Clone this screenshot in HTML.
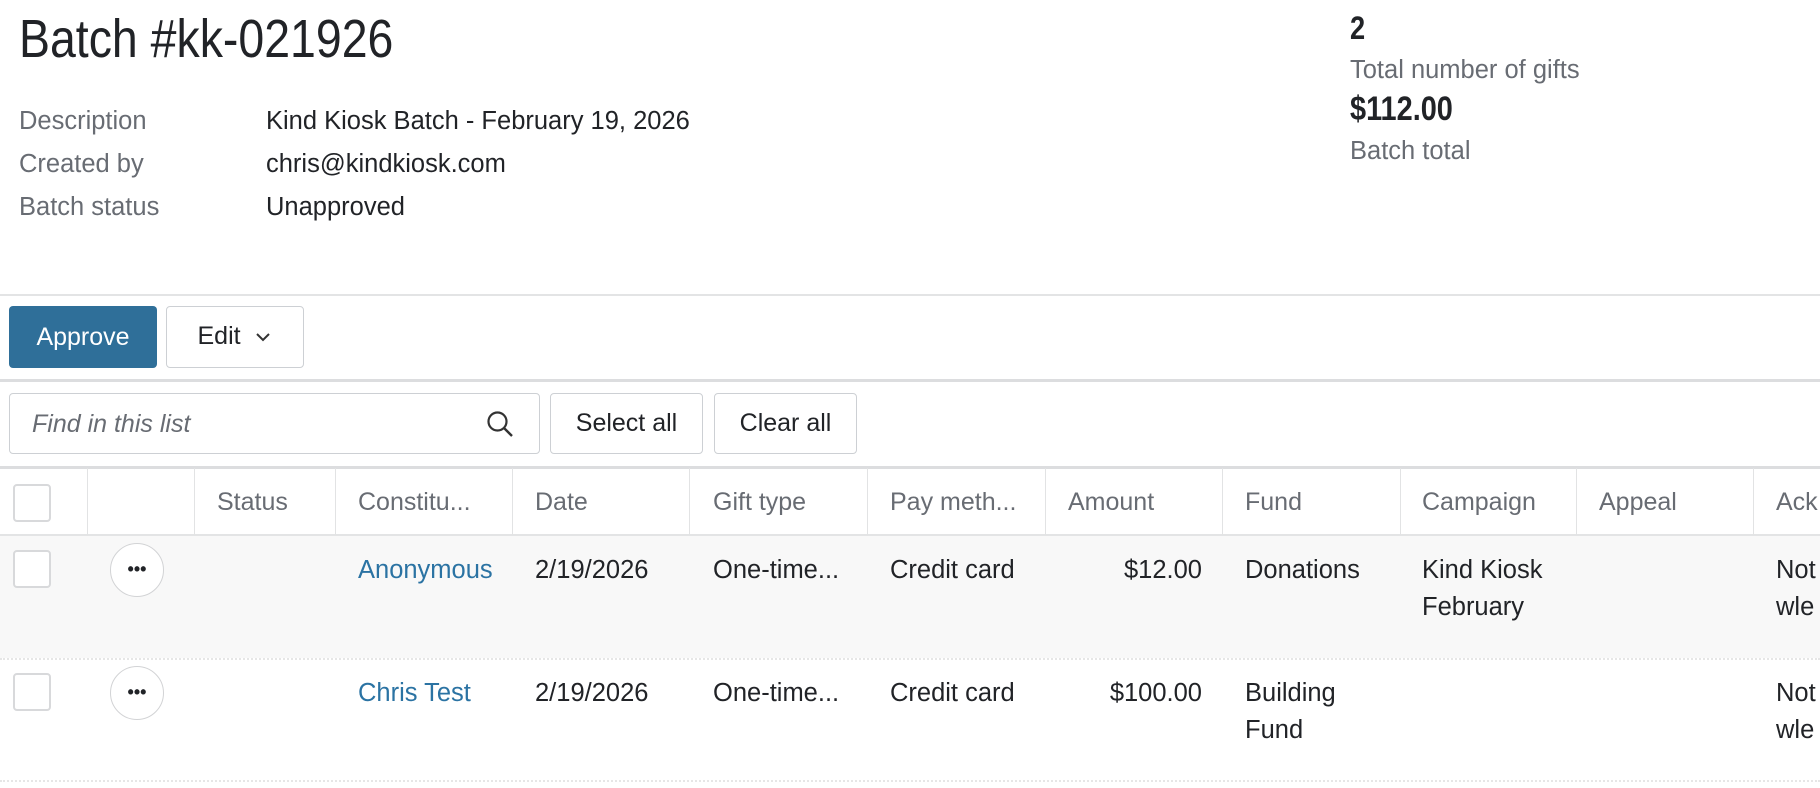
<!DOCTYPE html>
<html><head><meta charset="utf-8"><style>
*{margin:0;padding:0;box-sizing:border-box}
body{width:1820px;height:788px;background:#fff;font-family:"Liberation Sans",sans-serif;color:#212327;position:relative;overflow:hidden}
.a{position:absolute;white-space:nowrap}
.lbl{color:#686c73;font-size:25.5px}
.val{font-size:25.5px}
.hd{color:#686c73;font-size:25px;top:488px}
.c{font-size:25.5px}
.vl{position:absolute;top:468px;height:67px;width:1px;background:#e2e3e4}
.cb{position:absolute;width:38px;height:38px;border:2px solid #d8d9db;border-radius:4px;background:#fff}
.dots{position:absolute;width:54px;height:54px;border:1.5px solid #d2d3d5;border-radius:50%;background:#fff;text-align:center;line-height:50px;font-size:18px;font-weight:bold;letter-spacing:0px}
.btn{position:absolute;border:1.5px solid #cdd0d4;border-radius:4px;background:#fff;font-size:25px;text-align:center}
</style></head><body>
<div class="a" style="left:19px;top:8px;font-size:54px;transform:scaleX(0.86);transform-origin:left;color:#212327">Batch #kk-021926</div>
<div class="a lbl" style="left:19px;top:107px">Description</div>
<div class="a lbl" style="left:19px;top:150px">Created by</div>
<div class="a lbl" style="left:19px;top:193px">Batch status</div>
<div class="a val" style="left:266px;top:107px">Kind Kiosk Batch - February 19, 2026</div>
<div class="a val" style="left:266px;top:150px">chris@kindkiosk.com</div>
<div class="a val" style="left:266px;top:193px">Unapproved</div>
<div class="a" style="left:1350px;top:10px;font-size:32px;font-weight:bold;transform:scaleX(0.85);transform-origin:left">2</div>
<div class="a lbl" style="left:1350px;top:56px">Total number of gifts</div>
<div class="a" style="left:1350px;top:90px;font-size:34px;font-weight:bold;transform:scaleX(0.85);transform-origin:left">$112.00</div>
<div class="a lbl" style="left:1350px;top:137px">Batch total</div>
<div class="a" style="left:0;top:294px;width:1820px;height:2px;background:#e3e4e5"></div>
<div class="a" style="left:9px;top:306px;width:148px;height:62px;background:#2f6f99;border-radius:4px;color:#fff;font-size:25px;text-align:center;line-height:62px">Approve</div>
<div class="btn" style="left:166px;top:306px;width:138px;height:62px;line-height:59px">Edit&nbsp;&nbsp;<svg width="18" height="12" viewBox="0 0 18 12" style="vertical-align:middle"><path d="M3 3 L9 9 L15 3" fill="none" stroke="#333" stroke-width="2"/></svg></div>
<div class="a" style="left:0;top:379px;width:1820px;height:3px;background:#dcdddf"></div>
<div class="btn" style="left:9px;top:393px;width:531px;height:61px"></div>
<div class="a" style="left:32px;top:410px;font-size:25px;font-style:italic;color:#686c73">Find in this list</div>
<svg class="a" style="left:486px;top:410px" width="28" height="28" viewBox="0 0 28 28"><circle cx="11.5" cy="11.5" r="9" fill="none" stroke="#333" stroke-width="2.2"/><path d="M18 18 L26 26" stroke="#333" stroke-width="2.4"/></svg>
<div class="btn" style="left:550px;top:393px;width:153px;height:61px;line-height:58px">Select all</div>
<div class="btn" style="left:714px;top:393px;width:143px;height:61px;line-height:58px">Clear all</div>
<div class="a" style="left:0;top:466px;width:1820px;height:3px;background:#dcdddf"></div>
<div class="a" style="left:0;top:534px;width:1820px;height:2px;background:#e3e4e5"></div>
<div class="vl" style="left:87px"></div><div class="vl" style="left:194px"></div><div class="vl" style="left:335px"></div><div class="vl" style="left:512px"></div><div class="vl" style="left:689px"></div><div class="vl" style="left:867px"></div><div class="vl" style="left:1045px"></div><div class="vl" style="left:1222px"></div><div class="vl" style="left:1400px"></div><div class="vl" style="left:1576px"></div><div class="vl" style="left:1753px"></div>
<div class="cb" style="left:13px;top:484px"></div>
<div class="a hd" style="left:217px">Status</div>
<div class="a hd" style="left:358px">Constitu...</div>
<div class="a hd" style="left:535px">Date</div>
<div class="a hd" style="left:713px">Gift type</div>
<div class="a hd" style="left:890px">Pay meth...</div>
<div class="a hd" style="left:1068px">Amount</div>
<div class="a hd" style="left:1245px">Fund</div>
<div class="a hd" style="left:1422px">Campaign</div>
<div class="a hd" style="left:1599px">Appeal</div>
<div class="a hd" style="left:1776px">Ack</div>
<div class="a" style="left:0;top:536px;width:1820px;height:122px;background:#f8f8f8"></div>
<div class="a" style="left:0;top:658px;width:1820px;border-top:2px dotted #e6e6e6"></div>
<div class="a" style="left:0;top:780px;width:1820px;border-top:2px dotted #e6e6e6"></div>
<div class="cb" style="left:13px;top:550px"></div>
<div class="dots" style="left:110px;top:543px">•••</div>
<div class="a c" style="left:358px;top:556px;color:#2b73a3;width:135px;overflow:hidden">Anonymous</div>
<div class="a c" style="left:535px;top:556px">2/19/2026</div>
<div class="a c" style="left:713px;top:556px">One-time...</div>
<div class="a c" style="left:890px;top:556px">Credit card</div>
<div class="a c" style="left:1068px;top:556px;width:134px;text-align:right">$12.00</div>
<div class="a c" style="left:1245px;top:556px">Donations</div>
<div class="a c" style="left:1422px;top:552px;line-height:37px">Kind Kiosk<br>February</div>
<div class="a c" style="left:1776px;top:552px;line-height:37px">Not<br>wle</div>
<div class="cb" style="left:13px;top:673px"></div>
<div class="dots" style="left:110px;top:666px">•••</div>
<div class="a c" style="left:358px;top:679px;color:#2b73a3">Chris Test</div>
<div class="a c" style="left:535px;top:679px">2/19/2026</div>
<div class="a c" style="left:713px;top:679px">One-time...</div>
<div class="a c" style="left:890px;top:679px">Credit card</div>
<div class="a c" style="left:1068px;top:679px;width:134px;text-align:right">$100.00</div>
<div class="a c" style="left:1245px;top:675px;line-height:37px">Building<br>Fund</div>
<div class="a c" style="left:1776px;top:675px;line-height:37px">Not<br>wle</div>
</body></html>
